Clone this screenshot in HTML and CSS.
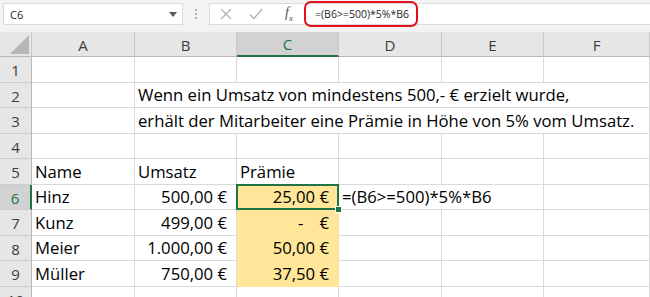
FILE: index.html
```
<!DOCTYPE html>
<html lang="de">
<head>
<meta charset="utf-8">
<title>Prämie</title>
<link rel="stylesheet" href="styles.css">
</head>
<body>
<div class="toolbar">
  <div class="namebox"><span class="nb-text">C6</span><svg class="nb-arrow" width="8" height="5" viewBox="0 0 8 5"><path d="M0 0H8L4 5Z" fill="#5a5a5a"/></svg></div>
  <div class="grip"><span></span><span></span><span></span></div>
  <div class="fbar">
    <div class="fbtns">
      <svg class="ico" width="12" height="12" viewBox="0 0 12 12"><path d="M1 1L11 11M11 1L1 11" stroke="#b3b3b3" stroke-width="1.3" fill="none"/></svg>
      <svg class="ico" width="14" height="12" viewBox="0 0 14 12"><path d="M1 6.5L5 10.5L13 1" stroke="#b3b3b3" stroke-width="1.3" fill="none"/></svg>
      <span class="fx"><i>f</i><sub>x</sub></span>
    </div>
    <div class="finput"><span class="fhl">=(B6&gt;=500)*5%*B6</span></div>
  </div>
</div>
<div class="sheet">
  <div class="corner"><svg width="19" height="19" viewBox="0 0 19 19"><path d="M19 0V19H0Z" fill="#b7b7b7"/></svg></div>
  <div class="ch">A</div><div class="ch">B</div><div class="ch active">C</div><div class="ch">D</div><div class="ch">E</div><div class="ch">F</div>

  <div class="rh">1</div><div class="c"></div><div class="c"></div><div class="c"></div><div class="c"></div><div class="c"></div><div class="c"></div>

  <div class="rh">2</div><div class="c"></div><div class="c span5">Wenn ein Umsatz von mindestens 500,- € erzielt wurde,</div>

  <div class="rh">3</div><div class="c"></div><div class="c span5">erhält der Mitarbeiter eine Prämie in Höhe von 5% vom Umsatz.</div>

  <div class="rh">4</div><div class="c"></div><div class="c"></div><div class="c"></div><div class="c"></div><div class="c"></div><div class="c"></div>

  <div class="rh">5</div><div class="c">Name</div><div class="c">Umsatz</div><div class="c">Prämie</div><div class="c"></div><div class="c"></div><div class="c"></div>

  <div class="rh active">6</div><div class="c">Hinz</div><div class="c num">500,00 €</div><div class="c num hl sel">25,00 €</div><div class="c span2">=(B6&gt;=500)*5%*B6</div><div class="c"></div>

  <div class="rh">7</div><div class="c">Kunz</div><div class="c num">499,00 €</div><div class="c num hl"><span class="dash">-</span>€</div><div class="c"></div><div class="c"></div><div class="c"></div>

  <div class="rh">8</div><div class="c">Meier</div><div class="c num">1.000,00 €</div><div class="c num hl">50,00 €</div><div class="c"></div><div class="c"></div><div class="c"></div>

  <div class="rh">9</div><div class="c">Müller</div><div class="c num">750,00 €</div><div class="c num hl">37,50 €</div><div class="c"></div><div class="c"></div><div class="c"></div>

  <div class="rh">10</div><div class="c"></div><div class="c"></div><div class="c"></div><div class="c"></div><div class="c"></div><div class="c"></div>
</div>
</body>
</html>
```
FILE: styles.css
```
html, body {
  margin: 0;
  padding: 0;
  background: #ffffff;
  overflow: hidden;
}
body {
  width: 650px;
  height: 297px;
  font-family: "Open Sans", "Noto Sans", sans-serif;
}
.toolbar {
  height: 32px;
  background: #f3f3f3;
  display: flex;
  align-items: flex-start;
  padding-top: 3px;
  box-sizing: border-box;
}
.namebox {
  margin-left: 3px;
  width: 180px;
  height: 22px;
  box-sizing: border-box;
  background: #fff;
  border: 1px solid #dcdcdc;
  display: flex;
  align-items: center;
  justify-content: space-between;
  padding: 0 5px 0 6px;
}
.nb-text {
  font-size: 11px;
  color: #262626;
}
.grip {
  width: 26px;
  height: 22px;
  display: flex;
  flex-direction: column;
  align-items: center;
  justify-content: center;
  gap: 2px;
}
.grip span {
  width: 2px;
  height: 2px;
  background: #b0b0b0;
}
.fbar {
  flex: 1;
  height: 22px;
  box-sizing: border-box;
  background: #fff;
  border: 1px solid #dcdcdc;
  border-right: none;
  display: flex;
  align-items: center;
}
.fbtns {
  width: 94px;
  display: flex;
  align-items: center;
  padding-left: 10px;
  box-sizing: border-box;
}
.fbtns .ico {
  margin-right: 17px;
}
.fbtns .ico + .ico {
  margin-right: 22px;
}
.fx {
  font-family: "Liberation Serif", "DejaVu Serif", serif;
  font-size: 14px;
  color: #555;
  line-height: 1;
}
.fx sub {
  font-size: 9px;
  font-style: italic;
}
.finput {
  flex: 1;
  display: flex;
  align-items: center;
  height: 100%;
}
.fhl {
  height: 26px;
  box-sizing: border-box;
  border: 2px solid #e3101b;
  border-radius: 7px;
  display: flex;
  align-items: center;
  padding: 0 7px 0 9px;
  font-size: 10.5px;
  color: #262626;
  white-space: nowrap;
}
.sheet {
  display: grid;
  grid-template-columns: 32px 103px 102px 102px 103px 102px 106px;
  grid-template-rows: 25px 26px 25px 26px 25px 26px 25px 26px 25px 26px 26px;
  font-size: 16.7px;
  color: #000;
}
.corner {
  background: #e6e6e6;
  border-right: 1px solid #c8c8c8;
  border-bottom: 1px solid #b8b8b8;
  display: flex;
  align-items: flex-end;
  justify-content: flex-end;
  padding: 0 2px 2px 0;
}
.corner svg {
  display: block;
}
.ch {
  background: #e6e6e6;
  border-right: 1px solid #c8c8c8;
  border-bottom: 1px solid #b8b8b8;
  display: flex;
  align-items: center;
  justify-content: center;
  font-size: 15px;
  color: #3c3c3c;
  padding-top: 1px;
}
.ch.active {
  background: #d2d2d2;
  color: #217346;
  border-bottom: 2px solid #217346;
}
.rh {
  background: #e6e6e6;
  border-right: 1px solid #b8b8b8;
  border-bottom: 1px solid #cccccc;
  display: flex;
  align-items: center;
  justify-content: center;
  font-size: 15px;
  color: #3c3c3c;
  padding-top: 1px;
}
.rh.active {
  background: #d2d2d2;
  color: #217346;
  border-right: 2px solid #217346;
}
.c {
  border-right: 1px solid #dadada;
  border-bottom: 1px solid #dadada;
  display: flex;
  align-items: flex-end;
  padding: 0 3px 1px 3px;
  white-space: nowrap;
  line-height: 22px;
  min-width: 0;
}
.span5 {
  grid-column: span 5;
}
.span2 {
  grid-column: span 2;
}
.num {
  justify-content: flex-end;
  padding-right: 9px;
}
.hl {
  background: #ffe699;
  border-color: #ffe699;
}
.sel {
  position: relative;
}
.sel::after {
  content: "";
  position: absolute;
  left: -1px;
  top: -1px;
  right: -1px;
  bottom: -1px;
  border: 2px solid #217346;
}
.sel::before {
  content: "";
  position: absolute;
  right: -4px;
  bottom: -4px;
  width: 5px;
  height: 5px;
  background: #217346;
  border: 1px solid #fff;
  z-index: 2;
}
.dash {
  margin-right: 16px;
}
```
